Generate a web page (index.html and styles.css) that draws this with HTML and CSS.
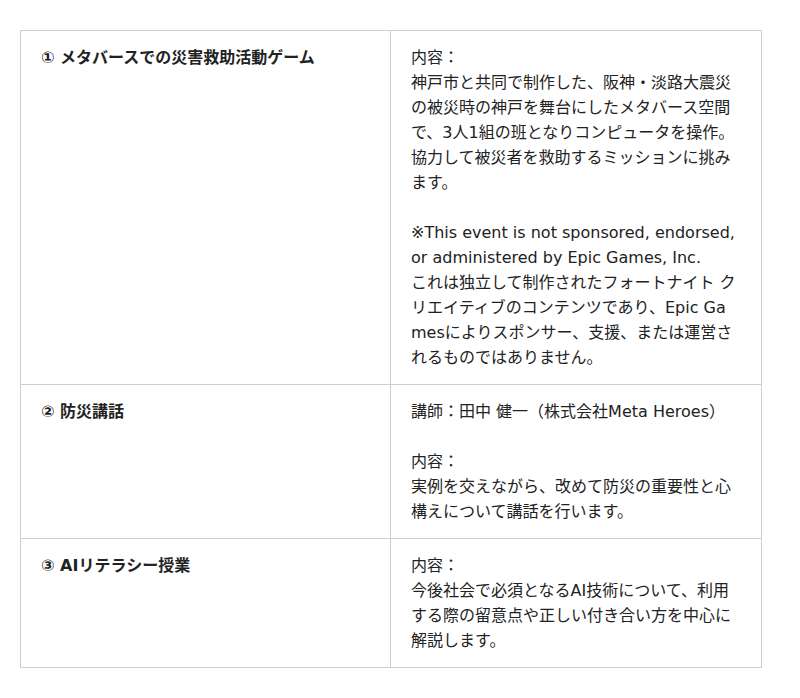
FILE: index.html
```html
<!DOCTYPE html>
<html lang="ja">
<head>
<meta charset="utf-8">
<link rel="stylesheet" href="styles.css">
</head>
<body>
<div class="page">
  <table class="program">
    <colgroup><col class="col-title"><col class="col-desc"></colgroup>
    <tr>
      <th class="title">① メタバースでの災害救助活動ゲーム</th>
      <td class="desc">内容：<br>神戸市と共同で制作した、阪神・淡路大震災の被災時の神戸を舞台にしたメタバース空間で、3人1組の班となりコンピュータを操作。協力して被災者を救助するミッションに挑みます。<br><br>※This event is not sponsored, endorsed, or administered by Epic Games, Inc.<br>これは独立して制作されたフォートナイト クリエイティブのコンテンツであり、Epic Gamesによりスポンサー、支援、または運営されるものではありません。</td>
    </tr>
    <tr>
      <th class="title">② 防災講話</th>
      <td class="desc">講師：田中 健一（株式会社Meta Heroes）<br><br>内容：<br>実例を交えながら、改めて防災の重要性と心構えについて講話を行います。</td>
    </tr>
    <tr>
      <th class="title">③ AIリテラシー授業</th>
      <td class="desc">内容：<br>今後社会で必須となるAI技術について、利用する際の留意点や正しい付き合い方を中心に解説します。</td>
    </tr>
  </table>
</div>
</body>
</html>
```
FILE: styles.css
```css
html, body {
  margin: 0;
  padding: 0;
  background: #fff;
}
.page {
  padding: 30px 20px;
}
.program {
  width: 741px;
  border-collapse: collapse;
  table-layout: fixed;
  font-family: "DejaVu Sans", "Noto Sans CJK JP", sans-serif;
  font-size: 16px;
  line-height: 25px;
  color: #222;
}
.col-title { width: 370px; }
.col-desc { width: 371px; }
.program th,
.program td {
  border: 1px solid #cfcfcf;
  padding: 14px 20px;
  vertical-align: top;
  text-align: left;
  word-break: break-all;
}
.title {
  font-weight: bold;
}
```
